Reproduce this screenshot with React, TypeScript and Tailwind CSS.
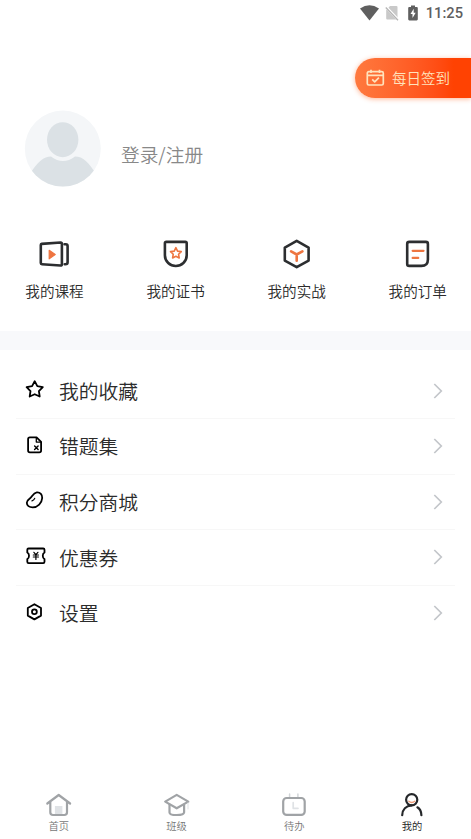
import type { ReactNode } from "react";

const shortcuts = [
  {
    label: "我的课程",
    icon: (
      <>
        <path d="M3.7 5.9 22.6 4.5q1.300 0 1.300 1.300v20.400q0 1.400-1.400 1.300L4 26.300q-1.200-.1-1.200-1.300V7q0-1 .9-1.100Z" />
        <path d="M26.500 6.200h1.300q1.800 0 1.800 1.800v16.300q0 1.900-2.100 1.900h-.8" />
        <path d="m11.200 12.300 6 4.300-6 4.200Z" fill="#ee7540" stroke="#ee7540" strokeWidth="1.2" />
      </>
    ),
  },
  {
    label: "我的证书",
    icon: (
      <>
        <path d="M6.300 3.900h19q1.400 0 1.400 1.400v12c0 6.400-5.200 10.700-10.900 10.700S4.900 23.700 4.900 17.300v-12q0-1.400 1.400-1.400Z" />
        <path d="m15.900 9.700 1.650 3.400 3.700.55-2.700 2.600.65 3.700-3.300-1.750-3.300 1.750.65-3.700-2.700-2.600 3.700-.55Z" stroke="#ee7540" strokeWidth="1.6" />
      </>
    ),
  },
  {
    label: "我的实战",
    icon: (
      <>
        <path d="m15.700 2.900 11.900 6.700v13L15.700 29.200 3.800 22.600v-13Z" />
        <path d="m10.100 13.300 5.600 3.200 5.700-3.200M15.700 16.500v6.300" stroke="#ee7540" />
      </>
    ),
  },
  {
    label: "我的订单",
    icon: (
      <>
        <path d="M7.200 3.900h16.700q2 0 2 2v15.500q0 6.500-6.500 6.500H7.200q-2 0-2-2v-20q0-2 2-2Z" />
        <path d="M10.700 12.800h10.800M10.700 19.900h5.500" stroke="#ee7540" strokeWidth="2.3" />
      </>
    ),
  },
];

const menu = [
  {
    label: "我的收藏",
    icon: <path d="m10.700 4.200 2.600 5 5.500.9-3.900 4 .8 5.400-5-2.300-5 2.300.8-5.400-3.900-4 5.500-.9Z" />,
  },
  {
    label: "错题集",
    icon: (
      <>
        <path d="M5.900 4.300h6.700l4.500 4.500v8.700q0 1.800-1.800 1.800H5.900q-1.800 0-1.800-1.800V6.100q0-1.800 1.800-1.800Z" />
        <path d="M12.300 4.600v4.500h4.500" strokeWidth="1.3" />
        <path d="m10.600 13 3.500 3.500M14.100 13l-3.500 3.500" strokeWidth="1.4" />
      </>
    ),
  },
  {
    label: "积分商城",
    icon: (
      <>
        <path d="M12.800 4.400c3.500-.3 5.600 2.300 5.400 5.600-.3 5-4.600 9.300-9.500 9.300-3.500 0-5.900-1.900-5.900-4.600 0-2.300 1.700-3.200 3.300-4.400 2.200-1.700 3-5.500 6.700-5.900Z" />
        <path d="M8 12.800q2-.5 2.700-2.400" strokeWidth="1.3" />
      </>
    ),
  },
  {
    label: "优惠券",
    icon: (
      <>
        <path d="M4.600 4.500h14.600q1.300 0 1.300 1.300v2.700c-2.300 1-2.300 5.700 0 6.700v2.600q0 1.300-1.300 1.300H4.600q-1.300 0-1.300-1.300v-2.600c2.300-1 2.300-5.700 0-6.700V5.800q0-1.300 1.300-1.300Z" />
        <path d="m9.900 8.300 2 2.300 2-2.300M9.300 11h5.200M9.300 13h5.200M11.900 11v4.400" strokeWidth="1.2" />
      </>
    ),
  },
  {
    label: "设置",
    icon: (
      <>
        <path d="m10.400 4.200 6.600 3.800v7.600l-6.600 3.800-6.600-3.800V8Z" />
        <circle cx="10.400" cy="11.800" r="2.400" />
      </>
    ),
  },
];

const tabs = [
  {
    label: "首页",
    icon: (
      <>
        <path d="M9.900 15h7.500v8.500H9.900Z" fill="#dfe2e5" stroke="none" />
        <path d="M2.300 12.500 13.700 4l11.400 8.500M5.300 11v10.300q0 2.700 2.700 2.700h11.300q2.700 0 2.700-2.700V11" />
      </>
    ),
  },
  {
    label: "班级",
    icon: (
      <>
        <path d="M13.700 3.900 25.300 10.600 13.700 17.300 2.200 10.600Z" />
        <path d="M6.500 13.500v7.900q0 2.600 7.200 2.600t7.400-2.600v-7.900" />
        <path d="M25 12v6" stroke="#dfe2e5" strokeWidth="1" />
      </>
    ),
  },
  {
    label: "待办",
    icon: (
      <>
        <path d="M9.600 3v3M17.900 3v3" stroke="#d3d6d9" strokeWidth="1.5" />
        <rect x="3.200" y="7" width="21.500" height="16.900" rx="3.500" />
        <path d="M13.200 11.700v5.600h4.800" stroke="#dfe2e5" strokeWidth="1.7" />
      </>
    ),
  },
  {
    label: "我的",
    active: true,
    icon: (
      <>
        <circle cx="13.700" cy="8.700" r="5.600" />
        <path d="M10.800 10.300q3 2.300 6 0" stroke="#ee9b78" strokeWidth="1.4" />
        <path d="M4.200 24.200c.2-5.800 3.900-9.500 9.500-9.800M19.400 16.300c2.500 1.600 3.900 4.500 4 7.900" />
      </>
    ),
  },
];

function StatusBar() {
  return (
    <header className="flex h-[26px] shrink-0 items-center justify-end pr-2 text-[#5f5f5f]">
      <svg width="19" height="16" viewBox="0 0 19 16" fill="currentColor">
        <path d="M0 3.500Q9.500-3 19 3.500L9.500 15.500Z" />
      </svg>
      <svg width="14" height="16" viewBox="0 0 14 16" className="ml-[6px]">
        <path d="M5 1h6.500q1 0 1 1v12.500H2.200q-1 0-1-1V5Z" fill="#c9c9c9" />
        <path d="m.5 1.500 13 13.500" stroke="#fff" strokeWidth="2.6" />
        <path d="M.8 2.500 13 15.200" stroke="#b5b5b5" strokeWidth="1.3" />
      </svg>
      <svg width="10" height="16" viewBox="0 0 10 16" className="ml-[9px]">
        <path d="M3 .5h4v1.500h1.700q1.100 0 1.100 1.100V14.300q0 1.100-1.100 1.100H1.300Q.2 15.400.2 14.300V3.100Q.2 2 1.300 2H3Z" fill="currentColor" />
        <path d="M5.700 3.700 2.500 9h2v4l3.200-5.300h-2Z" fill="#fff" />
      </svg>
      <span className="ml-2 font-[Roboto] text-[14.7px] leading-none font-medium">11:25</span>
    </header>
  );
}

function CheckInButton() {
  return (
    <button className="flex h-[39.5px] w-[116px] items-center self-end rounded-l-full bg-linear-to-r from-[#ff793e] to-[#ff4202] to-85% pl-[11px] text-[#ffe3bd] shadow-[0_1px_5px_rgba(255,90,20,0.45)]">
      <svg width="19" height="18" viewBox="0 0 19 18" fill="none" stroke="currentColor" strokeWidth="1.7" strokeLinejoin="round">
        <rect x="1.300" y="2.700" width="16" height="13.300" rx="1.500" />
        <path d="M5 .8v3.200M13.500.8v3.200M1.300 6.300h16M6.200 10.300l2.500 2.500 4.200-4.200" />
      </svg>
      <span className="ml-[7px] text-[14.5px] leading-none whitespace-nowrap">每日签到</span>
    </button>
  );
}

function Icon({ size, children }: { size: number; children: ReactNode }) {
  return (
    <svg
      width={size}
      height={size}
      viewBox={`0 0 ${size} ${size}`}
      fill="none"
      stroke="currentColor"
      strokeWidth={size === 32 ? 2.6 : size === 28 ? 2.2 : 1.8}
      strokeLinecap="round"
      strokeLinejoin="round"
    >
      {children}
    </svg>
  );
}

export default function App() {
  return (
    <div className="flex h-[839px] w-full flex-col overflow-hidden bg-white font-['Noto_Sans_CJK_SC','Liberation_Sans',sans-serif] font-[350] text-[#333]">
      <StatusBar />
      <div className="flex h-[72px] flex-col pt-[32px]">
        <CheckInButton />
      </div>

      <section className="mt-[12px] flex items-center pl-6">
        <svg width="78" height="78" viewBox="0 0 78 78">
          <clipPath id="avatar">
            <circle cx="38.800" cy="38.600" r="38" />
          </clipPath>
          <g clipPath="url(#avatar)">
            <path d="M0 0h78v78H0Z" fill="#f4f6f8" />
            <path d="M6 64C13 52 20 46.500 27 46.500q12 9 24 0c8 0 14 6 21 17.500v14H6Z" fill="#dbe1e5" />
            <ellipse cx="38.700" cy="29.700" rx="15.700" ry="17.500" fill="#dbe1e5" />
          </g>
        </svg>
        <span className="mt-[11px] ml-[19px] text-[18.7px] leading-none text-[#888]">登录/注册</span>
      </section>

      <nav className="mt-[50px] flex justify-between pr-[24px] pl-[25.3px]">
        {shortcuts.map((item) => (
          <a key={item.label} className="flex flex-col items-center text-[#2c2e30]">
            <Icon size={32}>{item.icon}</Icon>
            <span className="mt-[13px] text-[14.6px] leading-[16px] text-[#2b2b2b]">{item.label}</span>
          </a>
        ))}
      </nav>

      <div className="mt-8 h-[19px] shrink-0 bg-[#f8f9fb]" />

      <ul className="mt-[13.4px] px-4">
        {menu.map((item) => (
          <li key={item.label} className="flex h-[55.6px] items-center border-b border-[#f7f7f7] pr-3 pl-2 last:border-transparent">
            <span className="-mt-[3px] text-black">
              <Icon size={24}>{item.icon}</Icon>
            </span>
            <span className="ml-[11px] text-[19.8px] leading-none text-[#2b2b2b]">{item.label}</span>
            <svg width="10" height="16" viewBox="0 0 10 16" fill="none" stroke="#c3c6ca" strokeWidth="1.7" className="ml-auto">
              <path d="m1.300 1 7 7-7 7" />
            </svg>
          </li>
        ))}
      </ul>

      <nav className="mt-auto grid h-[48px] shrink-0 grid-cols-4">
        {tabs.map((tab) => (
          <a key={tab.label} className={tab.active ? "flex flex-col items-center text-[#25272a]" : "flex flex-col items-center text-[#a0a3a6]"}>
            <Icon size={28}>{tab.icon}</Icon>
            <span className={tab.active ? "mt-px text-[10.3px] leading-[12px] text-[#222]" : "mt-px text-[10.3px] leading-[12px] text-[#777]"}>
              {tab.label}
            </span>
          </a>
        ))}
      </nav>
    </div>
  );
}
